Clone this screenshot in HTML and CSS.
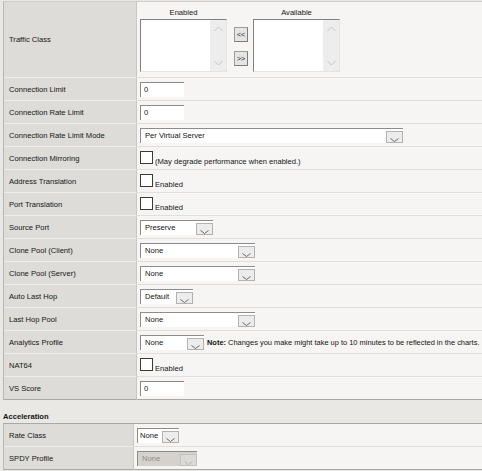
FILE: index.html
```html
<!DOCTYPE html>
<html lang="en">
<head>
    <meta charset="UTF-8">
    <title>Virtual Server Properties</title>
    <link rel="stylesheet" href="styles.css">
</head>
<body>
    <div class="props">
        <div class="row row-tall">
            <div class="label">Traffic Class</div>
            <div class="value value-top">
                <div class="list-col">
                    <div class="list-title">Enabled</div>
                    <div class="listbox">
                        <div class="scroll">
                            <svg width="9" height="6" viewBox="0 0 9 6"><polyline points="0.5,5 4.5,1 8.5,5" fill="none" stroke="#c4c4c4"/></svg>
                            <svg width="9" height="6" viewBox="0 0 9 6"><polyline points="0.5,1 4.5,5 8.5,1" fill="none" stroke="#c4c4c4"/></svg>
                        </div>
                    </div>
                </div>
                <div class="swap-buttons">
                    <span class="btn">&lt;&lt;</span>
                    <span class="btn">&gt;&gt;</span>
                </div>
                <div class="list-col list-col-right">
                    <div class="list-title">Available</div>
                    <div class="listbox">
                        <div class="scroll">
                            <svg width="9" height="6" viewBox="0 0 9 6"><polyline points="0.5,5 4.5,1 8.5,5" fill="none" stroke="#c4c4c4"/></svg>
                            <svg width="9" height="6" viewBox="0 0 9 6"><polyline points="0.5,1 4.5,5 8.5,1" fill="none" stroke="#c4c4c4"/></svg>
                        </div>
                    </div>
                </div>
            </div>
        </div>
        <div class="row">
            <div class="label">Connection Limit</div>
            <div class="value"><span class="text-input">0</span></div>
        </div>
        <div class="row">
            <div class="label">Connection Rate Limit</div>
            <div class="value"><span class="text-input">0</span></div>
        </div>
        <div class="row">
            <div class="label">Connection Rate Limit Mode</div>
            <div class="value">
                <span class="select w-mode"><span class="val">Per Virtual Server</span><span class="arrow"><svg width="9" height="4" viewBox="0 0 9 4"><polyline points="0.5,0.5 4.5,3.5 8.5,0.5" fill="none" stroke="#6a6a6a"/></svg></span></span>
            </div>
        </div>
        <div class="row">
            <div class="label">Connection Mirroring</div>
            <div class="value"><span class="check-line"><span class="check"></span>(May degrade performance when enabled.)</span></div>
        </div>
        <div class="row">
            <div class="label">Address Translation</div>
            <div class="value"><span class="check-line"><span class="check"></span>Enabled</span></div>
        </div>
        <div class="row">
            <div class="label">Port Translation</div>
            <div class="value"><span class="check-line"><span class="check"></span>Enabled</span></div>
        </div>
        <div class="row">
            <div class="label">Source Port</div>
            <div class="value">
                <span class="select w-port"><span class="val">Preserve</span><span class="arrow"><svg width="9" height="4" viewBox="0 0 9 4"><polyline points="0.5,0.5 4.5,3.5 8.5,0.5" fill="none" stroke="#6a6a6a"/></svg></span></span>
            </div>
        </div>
        <div class="row">
            <div class="label">Clone Pool (Client)</div>
            <div class="value">
                <span class="select w-pool"><span class="val">None</span><span class="arrow"><svg width="9" height="4" viewBox="0 0 9 4"><polyline points="0.5,0.5 4.5,3.5 8.5,0.5" fill="none" stroke="#6a6a6a"/></svg></span></span>
            </div>
        </div>
        <div class="row">
            <div class="label">Clone Pool (Server)</div>
            <div class="value">
                <span class="select w-pool"><span class="val">None</span><span class="arrow"><svg width="9" height="4" viewBox="0 0 9 4"><polyline points="0.5,0.5 4.5,3.5 8.5,0.5" fill="none" stroke="#6a6a6a"/></svg></span></span>
            </div>
        </div>
        <div class="row">
            <div class="label">Auto Last Hop</div>
            <div class="value">
                <span class="select w-hop"><span class="val">Default</span><span class="arrow"><svg width="9" height="4" viewBox="0 0 9 4"><polyline points="0.5,0.5 4.5,3.5 8.5,0.5" fill="none" stroke="#6a6a6a"/></svg></span></span>
            </div>
        </div>
        <div class="row">
            <div class="label">Last Hop Pool</div>
            <div class="value">
                <span class="select w-pool"><span class="val">None</span><span class="arrow"><svg width="9" height="4" viewBox="0 0 9 4"><polyline points="0.5,0.5 4.5,3.5 8.5,0.5" fill="none" stroke="#6a6a6a"/></svg></span></span>
            </div>
        </div>
        <div class="row">
            <div class="label">Analytics Profile</div>
            <div class="value">
                <span class="select w-analytics"><span class="val">None</span><span class="arrow"><svg width="9" height="4" viewBox="0 0 9 4"><polyline points="0.5,0.5 4.5,3.5 8.5,0.5" fill="none" stroke="#6a6a6a"/></svg></span></span>
                <span class="note"><b>Note:</b> Changes you make might take up to 10 minutes to be reflected in the charts.</span>
            </div>
        </div>
        <div class="row">
            <div class="label">NAT64</div>
            <div class="value"><span class="check-line"><span class="check"></span>Enabled</span></div>
        </div>
        <div class="row row-last">
            <div class="label">VS Score</div>
            <div class="value"><span class="text-input">0</span></div>
        </div>
    </div>

    <div class="section-title">Acceleration</div>

    <div class="props props-small">
        <div class="row">
            <div class="label">Rate Class</div>
            <div class="value">
                <span class="select w-rate"><span class="val">None</span><span class="arrow"><svg width="9" height="4" viewBox="0 0 9 4"><polyline points="0.5,0.5 4.5,3.5 8.5,0.5" fill="none" stroke="#6a6a6a"/></svg></span></span>
            </div>
        </div>
        <div class="row row-last">
            <div class="label">SPDY Profile</div>
            <div class="value">
                <span class="select w-spdy disabled"><span class="val">None</span><span class="arrow"><svg width="9" height="4" viewBox="0 0 9 4"><polyline points="0.5,0.5 4.5,3.5 8.5,0.5" fill="none" stroke="#b8b8b8"/></svg></span></span>
            </div>
        </div>
    </div>
</body>
</html>
```

FILE: styles.css
```css
body {
    margin: 0;
    padding-top: 1px;
    background-color: #e9e8e4;
    font-family: "Liberation Sans", Arial, sans-serif;
    font-size: 7.6px;
    color: #141414;
    overflow: hidden;
}

.props {
    width: 520px;
    margin-left: 3px;
    border-top: 1px solid #cfcecb;
    border-left: 1px solid #b9b8b4;
}

.props-small {
    border-top-color: #aaa9a5;
}

.row {
    display: flex;
    height: 23px;
}

.row-tall {
    height: 76px;
}

.label {
    box-sizing: border-box;
    width: 133px;
    padding-left: 5px;
    display: flex;
    align-items: center;
    background-color: #dddcd8;
    border-right: 1px solid #c8c7c3;
    border-bottom: 1px solid #eeedea;
}

.props-small .label {
    width: 130px;
}

.value {
    flex: 1;
    box-sizing: border-box;
    padding-left: 3px;
    display: flex;
    align-items: center;
    background-color: #f6f5f3;
    border-bottom: 1px solid #e0dfdc;
}

.row-last .label,
.row-last .value {
    border-bottom-color: #a9a8a4;
}

.value-top {
    align-items: flex-start;
    padding-top: 5px;
}

/* traffic class swap lists */
.list-col {
    display: flex;
    flex-direction: column;
    align-items: center;
}

.list-col-right {
    margin-left: 5px;
}

.list-title {
    height: 11px;
    line-height: 11px;
    margin-bottom: 1px;
}

.listbox {
    box-sizing: border-box;
    width: 87px;
    height: 53px;
    display: flex;
    justify-content: flex-end;
    background: #fff;
    border-top: 1px solid #808080;
    border-left: 1px solid #808080;
    border-right: 1px solid #e4e4e4;
    border-bottom: 1px solid #e4e4e4;
}

.scroll {
    width: 16px;
    background: #ededed;
    display: flex;
    flex-direction: column;
    justify-content: space-between;
    align-items: center;
    padding: 6px 0 5px;
}

.swap-buttons {
    display: flex;
    flex-direction: column;
    gap: 9px;
    margin: 20px 0 0 7px;
}

.btn {
    box-sizing: border-box;
    width: 14px;
    height: 15px;
    display: flex;
    align-items: center;
    justify-content: center;
    font-size: 7px;
    line-height: 7px;
    background: #e4e4e4;
    border: 1px solid #9c9c9c;
    border-right-color: #7c7c7c;
    border-bottom-color: #7c7c7c;
}

/* inputs */
.text-input {
    box-sizing: border-box;
    width: 44px;
    height: 15px;
    line-height: 14px;
    padding-left: 3px;
    background: #fff;
    border-top: 1px solid #8a8a8a;
    border-left: 1px solid #8a8a8a;
}

.select {
    box-sizing: border-box;
    display: flex;
    height: 15px;
    background: #fff;
    border-top: 1px solid #8c8c8c;
    border-left: 1px solid #8c8c8c;
}

.select .val {
    flex: 1;
    line-height: 14px;
    padding-left: 4px;
}

.select .arrow {
    box-sizing: border-box;
    width: 17px;
    height: 12px;
    margin-top: 2px;
    display: flex;
    justify-content: center;
    padding-top: 6px;
    background: #ececec;
    border: 1px solid #b2b2b2;
}

.select.disabled {
    background: #d5d2cc;
    color: #8e8e8e;
}

.select.disabled .arrow {
    background: #dcdad6;
    border-color: #c4c3c0;
}

.w-mode { width: 263px; }
.w-port { width: 73px; }
.w-pool { width: 115px; }
.w-hop { width: 53px; }
.w-analytics { width: 64px; }
.w-rate { width: 42px; }
.w-spdy { width: 60px; }

.w-rate .val {
    padding-left: 2px;
}

.note {
    margin-left: 3px;
    white-space: nowrap;
    font-size: 7.45px;
}

.check-line {
    display: inline-block;
}

.check {
    display: inline-block;
    box-sizing: border-box;
    width: 13px;
    height: 13px;
    margin-right: 2px;
    background: #fff;
    border: 1px solid #3a3a3a;
}

.section-title {
    margin: 12px 0 1px 3px;
    height: 10px;
    line-height: 10px;
    font-weight: bold;
}
```
